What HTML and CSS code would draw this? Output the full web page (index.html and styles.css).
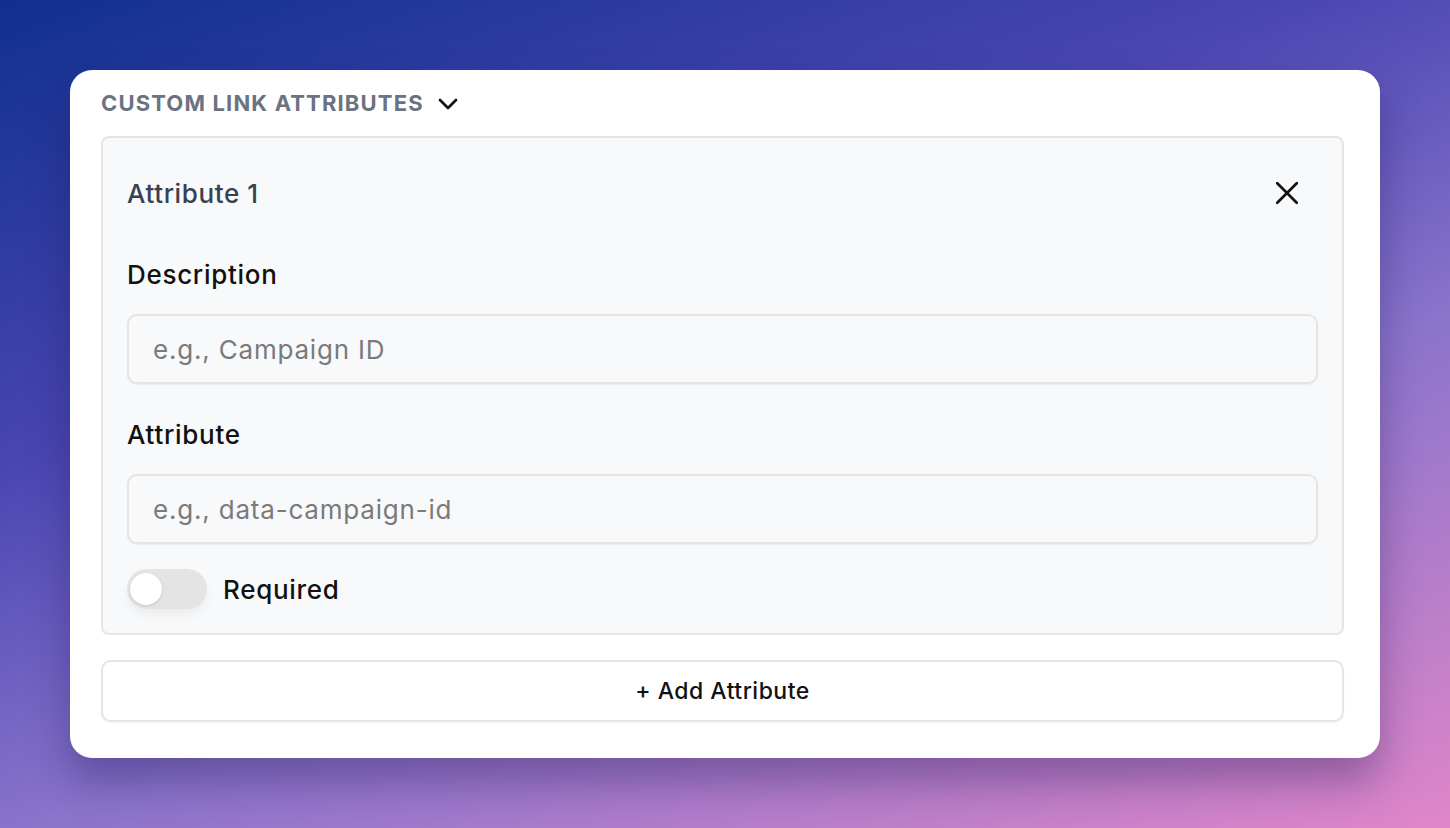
FILE: index.html
```html
<!DOCTYPE html>
<html>
<head>
<meta charset="utf-8">
<link rel="stylesheet" href="styles.css">
</head>
<body>
<div class="page">
  <div class="card">
    <div class="section-head">
      <span class="section-title">CUSTOM LINK ATTRIBUTES</span>
      <svg class="chev" width="32" height="32" viewBox="0 0 24 24" fill="none" stroke="#111" stroke-width="2" stroke-linecap="round" stroke-linejoin="round"><path d="M6 9l6 6 6-6"/></svg>
    </div>
    <div class="attr-box">
      <div class="attr-head">
        <span class="attr-title">Attribute 1</span>
        <svg class="close" width="36" height="36" viewBox="0 0 24 24" fill="none" stroke="#111" stroke-width="1.8" stroke-linecap="round"><path d="M5.5 5.5l13 13M18.5 5.5l-13 13"/></svg>
      </div>
      <div class="field">
        <label class="label">Description</label>
        <div class="input"><span class="ph">e.g., Campaign ID</span></div>
      </div>
      <div class="field field-last">
        <label class="label">Attribute</label>
        <div class="input"><span class="ph">e.g., data-campaign-id</span></div>
      </div>
      <div class="toggle-row">
        <span class="toggle"><span class="knob"></span></span>
        <span class="toggle-label">Required</span>
      </div>
    </div>
    <div class="add-btn">+ Add Attribute</div>
  </div>
</div>
</body>
</html>
```
FILE: styles.css
```css
* { box-sizing: border-box; }
html, body { margin: 0; padding: 0; }
body {
  width: 1450px;
  height: 828px;
  overflow: hidden;
  font-family: Inter, "Noto Sans", sans-serif;
  background: linear-gradient(160deg, #10308f 0%, #4a46b2 35%, #8a74cc 62%, #e086c8 100%);
}
.page {
  padding: 70px 70px 0 70px;
}
.card {
  width: 1310px;
  height: 688px;
  background: #fff;
  border-radius: 22px;
  padding: 17px 36px 36px 31px;
  box-shadow: 0 24px 40px rgba(30, 20, 80, 0.35);
  display: flex;
  flex-direction: column;
}
.section-head {
  display: flex;
  align-items: center;
  gap: 9px;
  height: 32px;
  margin-bottom: 17px;
}
.section-title {
  font-size: 22px;
  font-weight: 700;
  color: #6b7280;
  letter-spacing: 1.15px;
}
.chev { margin-top: 1px; margin-left: -1px; }
.attr-box {
  background: #f8f9fb;
  border: 2px solid #e5e5e5;
  border-radius: 8px;
  padding: 0 24px 24px 24px;
  display: flex;
  flex-direction: column;
}
.attr-head {
  height: 112px;
  display: flex;
  align-items: center;
  justify-content: space-between;
  padding-right: 13px;
  padding-bottom: 2px;
  margin-bottom: 10px;
}
.attr-title {
  font-size: 26px;
  color: #374151;
  font-weight: 500;
  letter-spacing: 0.6px;
}
.field {
  display: flex;
  flex-direction: column;
  margin-bottom: 36px;
}
.field-last { margin-bottom: 25px; }
.label {
  font-size: 26px;
  font-weight: 500;
  color: #111;
  line-height: 30px;
  margin-bottom: 24px;
  letter-spacing: 0.7px;
}
.input {
  height: 70px;
  border: 2px solid #e5e5e5;
  border-radius: 10px;
  background: #f8f9fb;
  box-shadow: 0 1px 2px rgba(0,0,0,0.06);
  display: flex;
  align-items: center;
  padding-left: 24px;
}
.ph {
  font-size: 26px;
  color: #7a7a7a;
  letter-spacing: 0.8px;
}
.toggle-row {
  display: flex;
  align-items: center;
  gap: 16px;
}
.toggle {
  width: 80px;
  height: 40px;
  border-radius: 20px;
  background: #e4e4e4;
  position: relative;
  box-shadow: 0 6px 10px rgba(0,0,0,0.05);
}
.knob {
  position: absolute;
  left: 3px;
  top: 4px;
  width: 32px;
  height: 32px;
  border-radius: 50%;
  background: #fff;
  box-shadow: 0 1px 3px rgba(0,0,0,0.15);
}
.toggle-label {
  font-size: 26px;
  font-weight: 500;
  color: #111;
  letter-spacing: 0.7px;
}
.add-btn {
  margin-top: 25px;
  height: 63px;
  border: 2px solid #e5e5e5;
  border-radius: 10px;
  background: #fff;
  display: flex;
  align-items: center;
  justify-content: center;
  font-size: 23px;
  font-weight: 500;
  color: #111;
  letter-spacing: 0.5px;
  box-shadow: 0 1px 2px rgba(0,0,0,0.05);
}
```
